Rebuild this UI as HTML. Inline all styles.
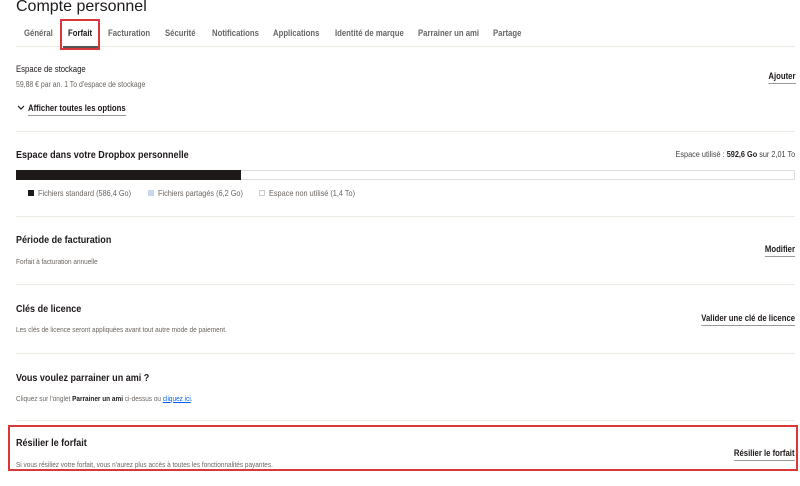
<!DOCTYPE html>
<html><head><meta charset="utf-8"><style>
*{margin:0;padding:0;box-sizing:border-box}
body{width:800px;height:486px;background:#fff;position:relative;overflow:hidden;font-family:"Liberation Sans",sans-serif;color:#1e1919}
.a{position:absolute;white-space:nowrap;display:inline-block;transform:scaleX(.86);transform-origin:left center}
.r{transform-origin:right center}
.t{font-size:9px;color:#666;font-weight:bold;top:28px}
.h{font-size:10.5px;font-weight:bold;color:#1e1919}
.s{font-size:7.5px;color:#6b6560}
.b{font-size:9px;font-weight:bold;border-bottom:1px solid #999;padding-bottom:2px}
.sep{position:absolute;left:16px;right:5px;height:1px;background:#eee9e2}
</style></head><body>
<div class="a" style="left:16px;top:-2px;font-size:16px;color:#1e1919;transform:none">Compte personnel</div>
<div class="a t" style="left:24px">Général</div>
<div class="a t" style="left:68px;color:#1e1919">Forfait</div>
<div class="a t" style="left:108px">Facturation</div>
<div class="a t" style="left:165px">Sécurité</div>
<div class="a t" style="left:212px">Notifications</div>
<div class="a t" style="left:273px">Applications</div>
<div class="a t" style="left:335px">Identité de marque</div>
<div class="a t" style="left:418px">Parrainer un ami</div>
<div class="a t" style="left:493px">Partage</div>
<div class="sep" style="top:46px"></div>
<div style="position:absolute;left:63px;top:46px;width:35px;height:2px;background:#555"></div>
<div style="position:absolute;left:60px;top:19px;width:40px;height:31px;border:2px solid #d9373a"></div>

<div class="a" style="left:16px;top:64px;font-size:9px">Espace de stockage</div>
<div class="a s" style="left:16px;top:80px;font-size:8px">59,88 € par an. 1 To d'espace de stockage</div>
<div class="a b r" style="right:5px;top:71px">Ajouter</div>
<svg style="position:absolute;left:17px;top:105px" width="8" height="6"><path d="M1 1L4 4L7 1" stroke="#1e1919" stroke-width="1.2" fill="none"/></svg>
<div class="a b" style="left:28px;top:103px">Afficher toutes les options</div>
<div class="sep" style="top:131px"></div>

<div class="a h" style="left:16px;top:149px">Espace dans votre Dropbox personnelle</div>
<div class="a r" style="right:5px;top:149px;font-size:8.5px;color:#444">Espace utilisé : <b style="color:#1e1919">592,6 Go</b> sur 2,01 To</div>
<div style="position:absolute;left:16px;top:170px;width:779px;height:10px;border:1px solid #ddd;border-radius:1px"></div>
<div style="position:absolute;left:16px;top:170px;width:225px;height:10px;background:#1e1919"></div>
<div style="position:absolute;left:28px;top:190px;width:6px;height:6px;background:#1e1919"></div>
<div class="a s" style="left:38px;top:188px;font-size:8.5px">Fichiers standard (586,4 Go)</div>
<div style="position:absolute;left:148px;top:190px;width:6px;height:6px;background:#c7d7f0"></div>
<div class="a s" style="left:158px;top:188px;font-size:8.5px">Fichiers partagés (6,2 Go)</div>
<div style="position:absolute;left:259px;top:190px;width:6px;height:6px;border:1px solid #ccc"></div>
<div class="a s" style="left:269px;top:188px;font-size:8.5px">Espace non utilisé (1,4 To)</div>
<div class="sep" style="top:216px"></div>

<div class="a h" style="left:16px;top:234px">Période de facturation</div>
<div class="a s" style="left:16px;top:257px">Forfait à facturation annuelle</div>
<div class="a b r" style="right:5px;top:244px">Modifier</div>
<div class="sep" style="top:284px"></div>

<div class="a h" style="left:16px;top:303px">Clés de licence</div>
<div class="a s" style="left:16px;top:325px">Les clés de licence seront appliquées avant tout autre mode de paiement.</div>
<div class="a b r" style="right:5px;top:313px">Valider une clé de licence</div>
<div class="sep" style="top:353px"></div>

<div class="a h" style="left:16px;top:372px">Vous voulez parrainer un ami ?</div>
<div class="a s" style="left:16px;top:394px">Cliquez sur l'onglet <b style="color:#1e1919">Parrainer un ami</b> ci-dessus ou <span style="color:#0061fe;text-decoration:underline">cliquez ici</span>.</div>
<div class="sep" style="top:420px"></div>

<div style="position:absolute;left:8px;top:425px;width:790px;height:46px;border:2px solid #d9373a"></div>
<div class="a h" style="left:16px;top:437px">Résilier le forfait</div>
<div class="a s" style="left:16px;top:460px">Si vous résiliez votre forfait, vous n'aurez plus accès à toutes les fonctionnalités payantes.</div>
<div class="a b r" style="right:5px;top:448px">Résilier le forfait</div>
</body></html>
